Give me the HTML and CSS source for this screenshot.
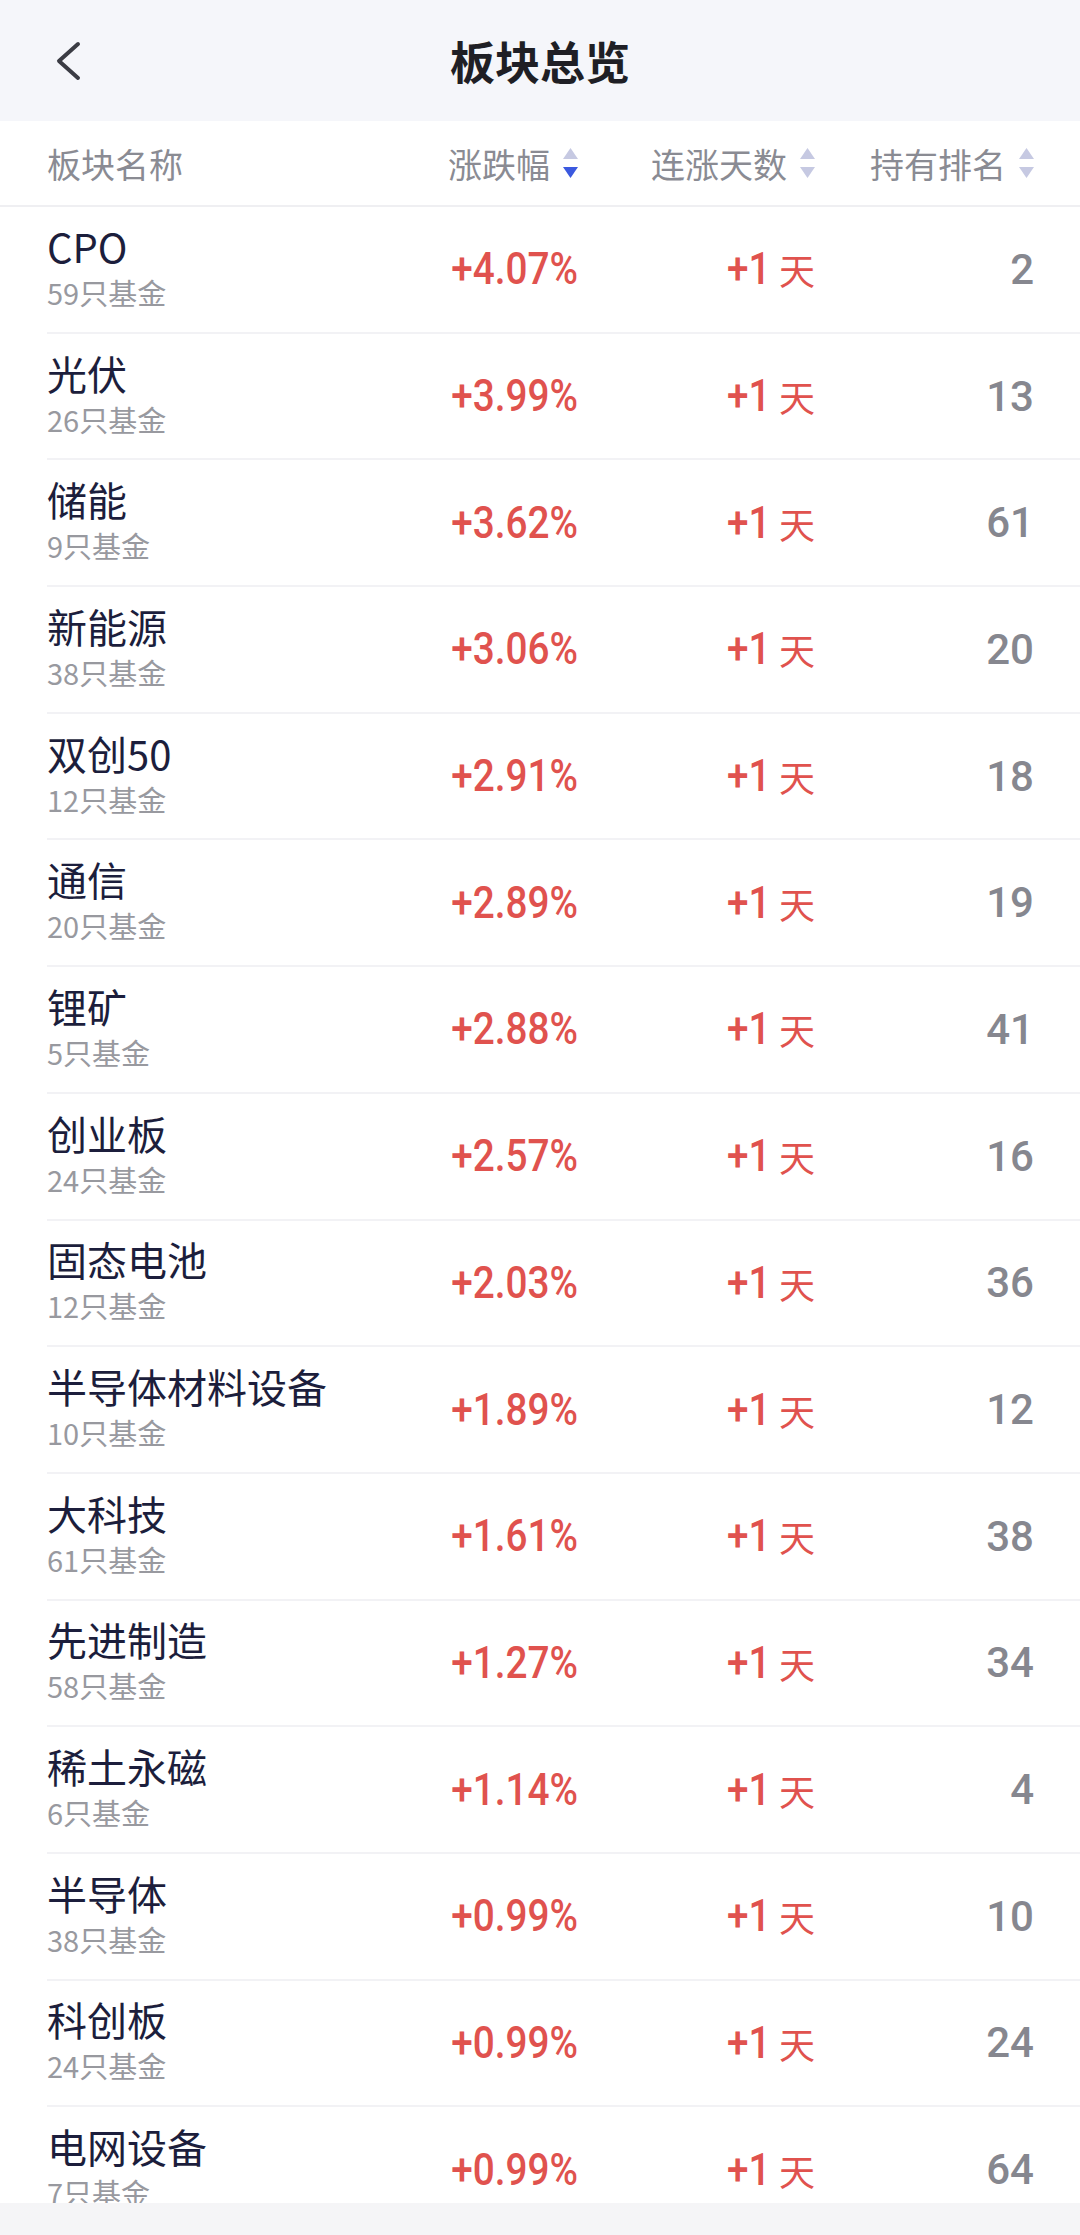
FILE: index.html
```html
<!DOCTYPE html>
<html lang="zh-CN">
<head>
<meta charset="utf-8">
<title>板块总览</title>
<link rel="stylesheet" href="styles.css">
</head>
<body>
<div class="page">
  <header class="topbar">
    <div class="back">
      <svg class="back-icon" width="30" height="44" viewBox="0 0 30 44"><path d="M24 5 L5 22 L24 39" fill="none" stroke="#3b3c44" stroke-width="4" stroke-linecap="round" stroke-linejoin="round"/></svg>
    </div>
    <h1 class="title">板块总览</h1>
    <div></div>
  </header>

  <div class="thead">
    <div class="th th-name">板块名称</div>
    <div class="th th-sort"><span>涨跌幅</span>
      <svg class="sort" width="15" height="30" viewBox="0 0 15 30"><polygon points="7.5,0 15,11 0,11" fill="#c6c9e2"/><polygon points="0,19 15,19 7.5,30" fill="#3b59df"/></svg>
    </div>
    <div class="th th-sort"><span>连涨天数</span>
      <svg class="sort" width="15" height="30" viewBox="0 0 15 30"><polygon points="7.5,0 15,11 0,11" fill="#c6c9e2"/><polygon points="0,19 15,19 7.5,30" fill="#c6c9e2"/></svg>
    </div>
    <div class="th th-sort"><span>持有排名</span>
      <svg class="sort" width="15" height="30" viewBox="0 0 15 30"><polygon points="7.5,0 15,11 0,11" fill="#c6c9e2"/><polygon points="0,19 15,19 7.5,30" fill="#c6c9e2"/></svg>
    </div>
  </div>

  <div class="list">
    <div class="row"><div class="name-cell"><div class="name">CPO</div><div class="sub">59只基金</div></div><div class="pct"><span class="num">+4.07%</span></div><div class="days"><span class="num">+1</span><span class="tian">天</span></div><div class="rank"><span class="num">2</span></div></div>
    <div class="row"><div class="name-cell"><div class="name">光伏</div><div class="sub">26只基金</div></div><div class="pct"><span class="num">+3.99%</span></div><div class="days"><span class="num">+1</span><span class="tian">天</span></div><div class="rank"><span class="num">13</span></div></div>
    <div class="row"><div class="name-cell"><div class="name">储能</div><div class="sub">9只基金</div></div><div class="pct"><span class="num">+3.62%</span></div><div class="days"><span class="num">+1</span><span class="tian">天</span></div><div class="rank"><span class="num">61</span></div></div>
    <div class="row"><div class="name-cell"><div class="name">新能源</div><div class="sub">38只基金</div></div><div class="pct"><span class="num">+3.06%</span></div><div class="days"><span class="num">+1</span><span class="tian">天</span></div><div class="rank"><span class="num">20</span></div></div>
    <div class="row"><div class="name-cell"><div class="name">双创50</div><div class="sub">12只基金</div></div><div class="pct"><span class="num">+2.91%</span></div><div class="days"><span class="num">+1</span><span class="tian">天</span></div><div class="rank"><span class="num">18</span></div></div>
    <div class="row"><div class="name-cell"><div class="name">通信</div><div class="sub">20只基金</div></div><div class="pct"><span class="num">+2.89%</span></div><div class="days"><span class="num">+1</span><span class="tian">天</span></div><div class="rank"><span class="num">19</span></div></div>
    <div class="row"><div class="name-cell"><div class="name">锂矿</div><div class="sub">5只基金</div></div><div class="pct"><span class="num">+2.88%</span></div><div class="days"><span class="num">+1</span><span class="tian">天</span></div><div class="rank"><span class="num">41</span></div></div>
    <div class="row"><div class="name-cell"><div class="name">创业板</div><div class="sub">24只基金</div></div><div class="pct"><span class="num">+2.57%</span></div><div class="days"><span class="num">+1</span><span class="tian">天</span></div><div class="rank"><span class="num">16</span></div></div>
    <div class="row"><div class="name-cell"><div class="name">固态电池</div><div class="sub">12只基金</div></div><div class="pct"><span class="num">+2.03%</span></div><div class="days"><span class="num">+1</span><span class="tian">天</span></div><div class="rank"><span class="num">36</span></div></div>
    <div class="row"><div class="name-cell"><div class="name">半导体材料设备</div><div class="sub">10只基金</div></div><div class="pct"><span class="num">+1.89%</span></div><div class="days"><span class="num">+1</span><span class="tian">天</span></div><div class="rank"><span class="num">12</span></div></div>
    <div class="row"><div class="name-cell"><div class="name">大科技</div><div class="sub">61只基金</div></div><div class="pct"><span class="num">+1.61%</span></div><div class="days"><span class="num">+1</span><span class="tian">天</span></div><div class="rank"><span class="num">38</span></div></div>
    <div class="row"><div class="name-cell"><div class="name">先进制造</div><div class="sub">58只基金</div></div><div class="pct"><span class="num">+1.27%</span></div><div class="days"><span class="num">+1</span><span class="tian">天</span></div><div class="rank"><span class="num">34</span></div></div>
    <div class="row"><div class="name-cell"><div class="name">稀土永磁</div><div class="sub">6只基金</div></div><div class="pct"><span class="num">+1.14%</span></div><div class="days"><span class="num">+1</span><span class="tian">天</span></div><div class="rank"><span class="num">4</span></div></div>
    <div class="row"><div class="name-cell"><div class="name">半导体</div><div class="sub">38只基金</div></div><div class="pct"><span class="num">+0.99%</span></div><div class="days"><span class="num">+1</span><span class="tian">天</span></div><div class="rank"><span class="num">10</span></div></div>
    <div class="row"><div class="name-cell"><div class="name">科创板</div><div class="sub">24只基金</div></div><div class="pct"><span class="num">+0.99%</span></div><div class="days"><span class="num">+1</span><span class="tian">天</span></div><div class="rank"><span class="num">24</span></div></div>
    <div class="row"><div class="name-cell"><div class="name">电网设备</div><div class="sub">7只基金</div></div><div class="pct"><span class="num">+0.99%</span></div><div class="days"><span class="num">+1</span><span class="tian">天</span></div><div class="rank"><span class="num">64</span></div></div>
  </div>

  <div class="bottombar"></div>
</div>
</body>
</html>
```
FILE: styles.css
```css
* { box-sizing: border-box; }

html, body {
  margin: 0;
  padding: 0;
  background: #ffffff;
}

body {
  font-family: "Noto Sans CJK SC", "Noto Sans", sans-serif;
  color: #1c1e3c;
}

.page {
  width: 1080px;
  height: 2235px;
  display: flex;
  flex-direction: column;
  overflow: hidden;
}

.topbar {
  flex: 0 0 121px;
  background: #f5f6fa;
  display: grid;
  grid-template-columns: 1fr auto 1fr;
  align-items: center;
}

.back {
  padding-left: 54px;
  display: flex;
  align-items: center;
}

.back-icon { display: block; }

.title {
  margin: 0;
  font-size: 45px;
  font-weight: 700;
  color: #1f1f25;
  line-height: 1;
}

.thead {
  flex: 0 0 86px;
  display: grid;
  grid-template-columns: 1fr 237px 237px 219px;
  align-items: center;
  padding: 0 46px 0 47px;
  border-bottom: 2px solid #efeff2;
  font-size: 34px;
  color: #8a8b93;
}

.th-sort {
  display: flex;
  justify-content: flex-end;
  align-items: center;
  gap: 13px;
}

.sort { display: block; }

.list {
  flex: 1 1 auto;
  overflow: hidden;
}

.row {
  height: 126.7px;
  margin-left: 47px;
  padding-right: 46px;
  display: grid;
  grid-template-columns: 1fr 237px 237px 219px;
  align-items: center;
  border-bottom: 2px solid #f2f2f5;
}

.name-cell {
  display: flex;
  flex-direction: column;
}

.name {
  font-size: 40px;
  line-height: 45px;
  color: #1c1e3c;
  white-space: nowrap;
}

.sub {
  font-size: 29px;
  line-height: 46px;
  color: #98999f;
  white-space: nowrap;
}

.pct, .days, .rank {
  display: flex;
  justify-content: flex-end;
  align-items: center;
}

.num {
  display: inline-block;
  font-family: Roboto, "Noto Sans", sans-serif;
  font-weight: 500;
  font-size: 44px;
  transform: scaleX(0.88);
  transform-origin: right center;
}

.pct .num { color: #e0524e; }

.days .num { color: #e0524e; }

.tian {
  font-size: 36px;
  color: #e0524e;
  margin-left: 9px;
}

.rank .num {
  color: #86878f;
  font-size: 42px;
  transform: none;
}

.bottombar {
  flex: 0 0 32px;
  background: #f5f5f7;
}
```
